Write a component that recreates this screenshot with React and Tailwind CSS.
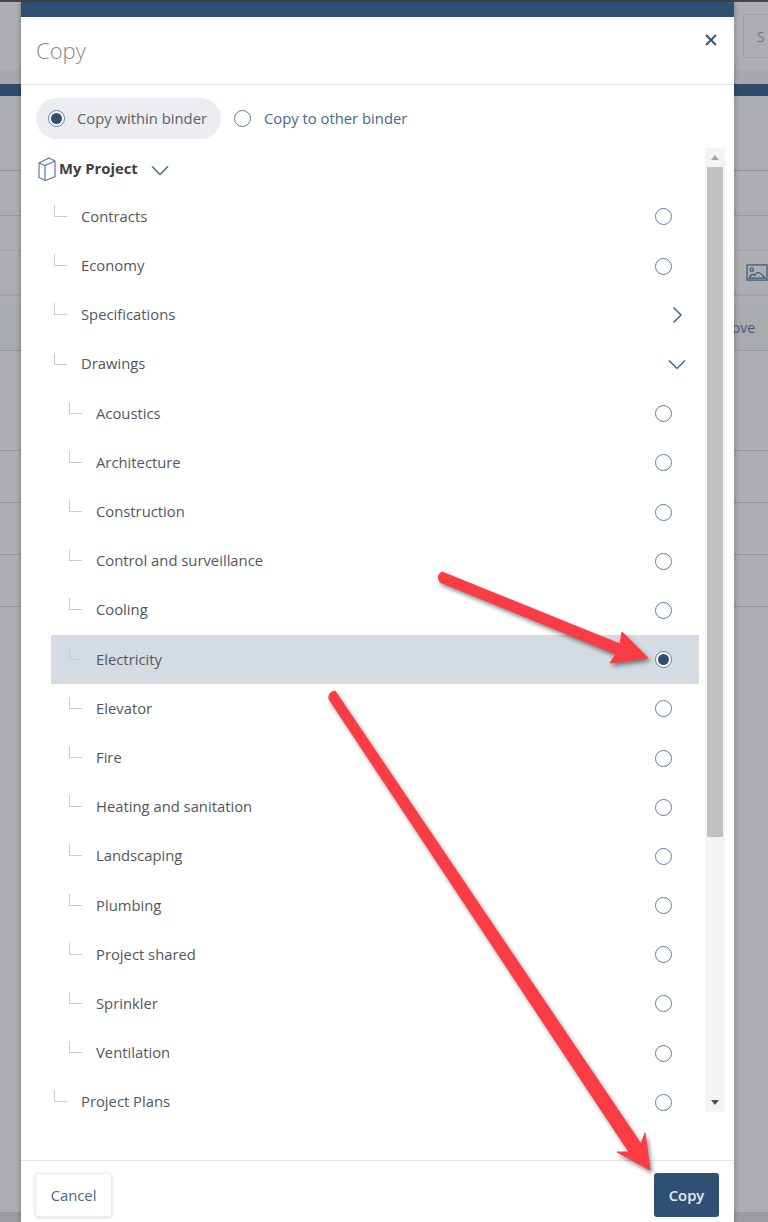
const level1Top = ['Contracts', 'Economy'];
const drawings = [
  'Acoustics', 'Architecture', 'Construction', 'Control and surveillance', 'Cooling', 'Electricity',
  'Elevator', 'Fire', 'Heating and sanitation', 'Landscaping', 'Plumbing', 'Project shared', 'Sprinkler', 'Ventilation',
];

const Radio = ({ checked }) => (
  <span className="flex h-[17px] w-[17px] shrink-0 items-center justify-center rounded-full border-[1.5px] border-[#5f7d9f] bg-white">
    {checked && <span className="h-[11px] w-[11px] rounded-full bg-[#2f5073]" />}
  </span>
);

const Elbow = () => (
  <span className="mb-[12px] h-[12px] w-[13px] shrink-0 border-b-[1.5px] border-l-[1.5px] border-[#c9cbce]" />
);

const TreeRow = ({ label, level = 1, selected, right }) => (
  <div className={`flex h-[49.2px] items-center rounded-[1px] pr-[27px] ${level === 2 ? 'pl-[18px]' : 'pl-[3px]'} ${selected ? 'bg-[#d5dbe3]' : ''}`}>
    <Elbow />
    <span className="mb-[2px] ml-[14px] flex-1 text-[14.8px] text-[#53575c]">{label}</span>
    {right || <Radio checked={selected} />}
  </div>
);

const ChevronRight = () => (
  <svg width="12" height="18" viewBox="0 0 12 18" className="mr-[-11px]" fill="none" stroke="#47688c" strokeWidth="1.5">
    <path d="M2.5 1.5 L10 9 L2.5 16.5" />
  </svg>
);

const ChevronDown = ({ className = '' }) => (
  <svg width="18" height="11" viewBox="0 0 18 11" className={className} fill="none" stroke="#47688c" strokeWidth="1.5">
    <path d="M1 1.5 L9 9.5 L17 1.5" />
  </svg>
);

const BoxIcon = () => (
  <svg width="18" height="24" viewBox="0 0 18 24" className="shrink-0" fill="none" stroke="#5b7ea6" strokeWidth="1.2">
    <path d="M1 6 L11 1 L17 4 L17 19.5 L7 23.5 L1 20.5 Z" />
    <path d="M1 6 L7 8.5 L17 4 M7 8.5 L7 23.5" />
  </svg>
);

// dimmed page behind the dialog
const Backdrop = () => (
  <div className="flex h-[1222px] flex-col bg-[#adaeb2] text-[#3f5a7a]">
    <div className="h-[2px] bg-[#444649]" />
    <div className="flex h-[68px] items-start justify-end pt-[12px]">
      <div className="flex h-[44px] w-[25px] items-center rounded-l-[4px] border border-r-0 border-[#9d9fa3] pl-[13px] text-[14px] text-[#75777b]">S</div>
    </div>
    <div className="h-[14px] bg-[#a5a7ab]" />
    <div className="h-[12px] bg-[#2f4c6e]" />
    <div className="h-[75px] border-b border-[#8f9195]" />
    <div className="h-[45px] border-b border-[#999b9f]" />
    <div className="flex h-[35px] border-b border-[#a0a2a6]" />
    <div className="flex h-[45px] items-center justify-end border-b-[2px] border-[#a0a2a6] pl-[746px]">
      <svg width="22" height="19" viewBox="0 0 23 20" fill="none" stroke="#3f5a7a" strokeWidth="1.3" className="ml-auto shrink-0">
        <rect x="1" y="2" width="21" height="16" />
        <circle cx="6" cy="7" r="1.8" />
        <path d="M3 16 Q6 10 9 13 Q13 6 20 16 Z" />
      </svg>
    </div>
    <div className="h-[9px]" />
    <div className="flex h-[46px] items-center justify-end border-b border-[#95979b] bg-[#a8abae] pr-[13px] text-[14px]">ove</div>
    <div className="h-[100px] border-b border-[#95979b]" />
    <div className="h-[52px] border-b border-[#95979b]" />
    <div className="h-[52px] border-b border-[#95979b]" />
    <div className="h-[52px] border-b border-[#95979b]" />
    <div className="flex-1" />
    <div className="h-[10px] bg-[#9a9ca0]" />
  </div>
);

const Arrows = () => (
  <svg width="768" height="1222" viewBox="0 0 768 1222" className="pointer-events-none absolute left-0 top-0 drop-shadow-[2px_3px_2px_rgba(0,0,0,0.45)]">
    <g fill="#fb3c45" stroke="#fb3c45" strokeLinejoin="round">
      <path d="M442 572 L620 644 L622 632 L648 658 L610 663 L616 654 L440 582 Q436 575 442 572 Z" />
      <path d="M335 691 L641 1144 L645 1133 L650 1170 L617 1152 L629 1152 L329 699 Q328 692 335 691 Z" />
    </g>
  </svg>
);

export default function App() {
  return (
    <div className="relative h-[1222px] w-[768px] overflow-hidden font-['Open_Sans',sans-serif]">
      <Backdrop />
      <div className="absolute bottom-0 left-[21px] top-[2px] flex w-[713px] flex-col bg-white shadow-[0_0_5px_rgba(0,0,0,0.35)]">
        <div className="h-[15px] bg-[#2f5073]" />
        <div className="flex h-[68px] items-start justify-between border-b-[1.5px] border-[#e4e5e7] pl-[15px] pr-[17px]">
          <h1 className="mt-[15px] text-[22px] font-light leading-[36px] text-[#85888c]">Copy</h1>
          <svg width="12" height="12" viewBox="0 0 12 12" className="mt-[17px]" fill="none" stroke="#2f5073" strokeWidth="1.8">
            <path d="M1 1 L11 11 M11 1 L1 11" />
          </svg>
        </div>
        <div className="flex h-[63px] items-center pb-[9px] pl-[15px] pt-[13px] text-[14.8px]">
          <div className="flex h-[41px] items-center rounded-full bg-[#ebedf0] pl-[12px] pr-[14px] text-[#5d6166]">
            <Radio checked />
            <span className="ml-[12px]">Copy within binder</span>
          </div>
          <div className="ml-[13px] flex items-center text-[#47688c]">
            <Radio />
            <span className="ml-[13px]">Copy to other binder</span>
          </div>
        </div>
        <div className="flex h-[964px] pl-[15px]">
          <div className="w-[669px] pr-[6px]">
            <div className="mb-[2.4px] flex h-[42px] items-center pl-[2px]">
              <BoxIcon />
              <span className="mb-[2px] ml-[3px] text-[14.8px] font-bold text-[#3d4045]">My Project</span>
              <ChevronDown className="ml-[13px] mt-[2px]" />
            </div>
            <div className="ml-[15px]">
              {level1Top.map((label) => <TreeRow key={label} label={label} />)}
              <TreeRow label="Specifications" right={<ChevronRight />} />
              <TreeRow label="Drawings" right={<span className="mr-[-14px]"><ChevronDown /></span>} />
              {drawings.map((label) => (
                <TreeRow key={label} label={label} level={2} selected={label === 'Electricity'} />
              ))}
              <TreeRow label="Project Plans" />
            </div>
          </div>
          <div className="flex w-[20px] flex-col bg-[#f4f4f4]">
            <div className="flex h-[19px] items-center justify-center">
              <span className="h-0 w-0 border-x-[4px] border-b-[5px] border-x-transparent border-b-[#a3a3a3]" />
            </div>
            <div className="mx-[2px] h-[670px] bg-[#c1c1c1]" />
            <div className="flex-1" />
            <div className="flex h-[19px] items-center justify-center">
              <span className="h-0 w-0 border-x-[4px] border-t-[5px] border-x-transparent border-t-[#505050]" />
            </div>
          </div>
        </div>
        <div className="mt-[48px] flex flex-1 items-start justify-between border-t-[1.5px] border-[#e4e5e7] pl-[14px] pr-[15px] pt-[12px] text-[14.8px]">
          <button className="h-[44px] w-[77px] rounded-[3px] border border-[#eceded] bg-white text-[#47688c] shadow-[0_1px_3px_rgba(0,0,0,0.15)]">Cancel</button>
          <button className="h-[44px] w-[65px] rounded-[3px] bg-[#2f5073] font-semibold text-[#e8ecf1]">Copy</button>
        </div>
      </div>
      <Arrows />
    </div>
  );
}
